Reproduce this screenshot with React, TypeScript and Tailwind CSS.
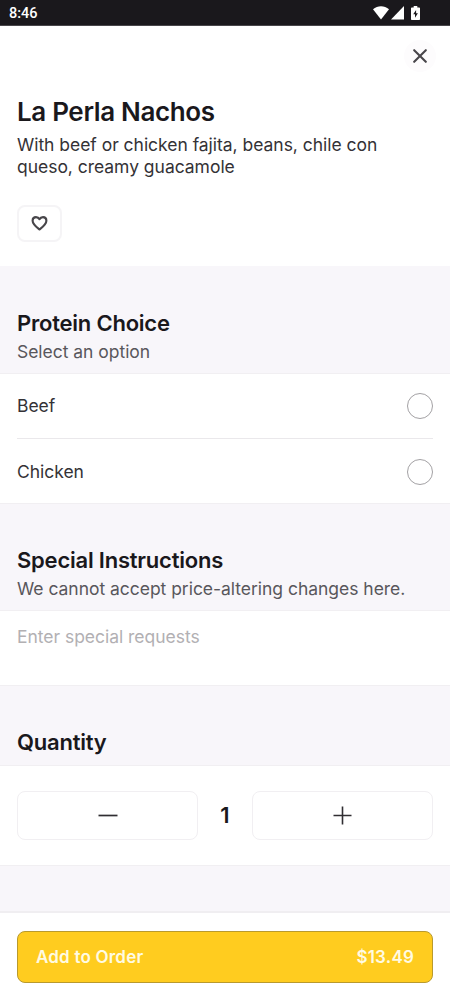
import { useState } from "react";

interface SectionHeaderProps {
  title: string;
  subtitle?: string;
  className: string;
}

const StatusBar = () => (
  <div className="h-[26px] shrink-0 bg-[#1a181c] border-b border-[#48464a] pl-[9px] pr-[30px] flex items-center justify-between text-white">
    <span className="font-[Roboto,sans-serif] text-[14.5px] font-medium leading-none pt-[3px]">
      8:46
    </span>
    <div className="flex items-start gap-[2px]">
      <svg width="16" height="14" viewBox="0 0 16 14" fill="currentColor">
        <path d="M0 3.2C4.6-.9 11.4-.9 16 3.2L8 13.5Z" />
      </svg>
      <svg width="13" height="14" viewBox="0 0 13 14" fill="currentColor">
        <path d="M13 0V13.5H0Z" />
      </svg>
      <svg className="ml-[5px]" width="9" height="14" viewBox="0 0 9 14">
        <path d="M2.7 0H6.3V1.4H8.2Q9 1.4 9 2.2V13.2Q9 14 8.2 14H.8Q0 14 0 13.2V2.2Q0 1.4.8 1.4H2.7Z" fill="currentColor" />
        <path d="M5.1 4L2.2 8.3H4V11.7L6.9 7.3H5.1Z" fill="#1a181c" />
      </svg>
    </div>
  </div>
);

const SectionHeader = ({ title, subtitle, className }: SectionHeaderProps) => (
  <div className={`bg-[#f8f6fa] border-b border-[#f1eff2] px-[17px] shrink-0 ${className}`}>
    <h2 className="text-[22px] font-semibold leading-[28px] tracking-[-0.22px] text-[#1a181c]">{title}</h2>
    {subtitle && (
      <p className="mt-[2px] text-[17.5px] leading-[26px] tracking-[-0.03px] text-[#59575c]">{subtitle}</p>
    )}
  </div>
);

const App = () => {
  const [selected, setSelected] = useState<string | null>(null);
  const [quantity, setQuantity] = useState(1);

  return (
    <div className="w-[450px] h-[1000px] overflow-hidden flex flex-col bg-white font-[Inter,sans-serif] text-[#1a181c]">
      <StatusBar />

      {/* Item details */}
      <div className="h-[240px] shrink-0 px-[17px] pt-[14px]">
        <div className="flex justify-end">
          <button type="button" aria-label="Close" className="w-8 h-8 -mr-[3px] rounded-full bg-[#fdfcfd] flex items-center justify-center">
            <svg width="14" height="14" viewBox="0 0 14 14" fill="none" stroke="#48464a" strokeWidth="2.1" strokeLinecap="round">
              <path d="M1.2 1.2L12.8 12.8M12.8 1.2L1.2 12.8" />
            </svg>
          </button>
        </div>
        <h1 className="mt-[23px] text-[26px] leading-[34px] font-semibold tracking-[-0.35px]">La Perla Nachos</h1>
        <p className="mt-[5px] text-[17.5px] leading-[22px] tracking-[-0.03px] text-[#343236]">
          With beef or chicken fajita, beans, chile con
          <br />
          queso, creamy guacamole
        </p>
        <button type="button" aria-label="Favorite" className="mt-[27px] w-[45px] h-[37px] rounded-lg border-2 border-[#f5f4f6] flex items-center justify-center">
          <svg width="18" height="16" viewBox="0 0 18 16" fill="none" stroke="#48464a" strokeWidth="2.1" strokeLinejoin="round">
            <path d="M8.5 13.5C5.1 10.8 1.6 8.2 1.6 4.7C1.6 2.6 3.1 1.1 5 1.1C6.6 1.1 7.8 1.9 8.5 3.2C9.2 1.9 10.4 1.1 12 1.1C13.9 1.1 15.4 2.6 15.4 4.7C15.4 8.2 11.9 10.8 8.5 13.5Z" />
          </svg>
        </button>
      </div>

      <SectionHeader title="Protein Choice" subtitle="Select an option" className="h-[108px] pt-[43px]" />
      <div className="h-[129px] shrink-0 px-[17px]">
        {["Beef", "Chicken"].map((option) => (
          <button
            key={option}
            type="button"
            onClick={() => setSelected(option)}
            className="w-full h-[65px] flex items-center justify-between border-b border-[#eae8eb] last:border-b-0"
          >
            <span className="pt-px text-[17.5px] tracking-[-0.03px] text-[#343236]">{option}</span>
            <span className={`w-[26px] h-[26px] rounded-full border ${selected === option ? "border-[#ffcc1f] bg-[#ffcc1f]" : "border-[#a3a1a4]"}`} />
          </button>
        ))}
      </div>

      <SectionHeader
        title="Special Instructions"
        subtitle="We cannot accept price-altering changes here."
        className="h-[108px] pt-[42px] border-t"
      />
      <textarea
        placeholder="Enter special requests"
        className="block w-full h-[74px] shrink-0 resize-none px-[17px] pt-[13px] text-[17.5px] leading-[26px] tracking-[-0.03px] outline-none placeholder:text-[#b2b0b3]"
      />

      <SectionHeader title="Quantity" className="h-[81px] pt-[42px] border-t" />
      <div className="h-[99px] shrink-0 px-[17px] pt-[25px] flex items-start">
        <button
          type="button"
          aria-label="Decrease"
          onClick={() => setQuantity(Math.max(1, quantity - 1))}
          className="w-[181px] h-[49px] rounded-lg border border-[#f1eff2] flex items-center justify-center"
        >
          <svg width="20" height="20" viewBox="0 0 20 20" fill="none" stroke="#302e32" strokeWidth="1.7">
            <path d="M.5 9.5H19.5" />
          </svg>
        </button>
        <span className="flex-1 h-[49px] flex items-center justify-center text-[22px] font-semibold">{quantity}</span>
        <button
          type="button"
          aria-label="Increase"
          onClick={() => setQuantity(quantity + 1)}
          className="w-[181px] h-[49px] rounded-lg border border-[#f1eff2] flex items-center justify-center"
        >
          <svg width="20" height="20" viewBox="0 0 20 20" fill="none" stroke="#302e32" strokeWidth="1.6">
            <path d="M.5 9.5H18.5M9.5 .5V18.5" />
          </svg>
        </button>
      </div>
      <div className="h-[48px] shrink-0 bg-[#f8f6fa] border-t border-b-2 border-t-[#f1eff2] border-b-[#f0eef1]" />

      {/* Footer */}
      <div className="flex-1 px-[17px] pt-[18px]">
        <button
          type="button"
          className="w-full h-[52px] rounded-lg border border-[#b99a2d] bg-[#ffcc1f] px-[18px] pt-px flex items-center justify-between text-[17px] font-semibold tracking-[0.2px] text-[#fffbe3]"
        >
          <span>Add to Order</span>
          <span>${(13.49 * quantity).toFixed(2)}</span>
        </button>
      </div>
    </div>
  );
};

export default App;
